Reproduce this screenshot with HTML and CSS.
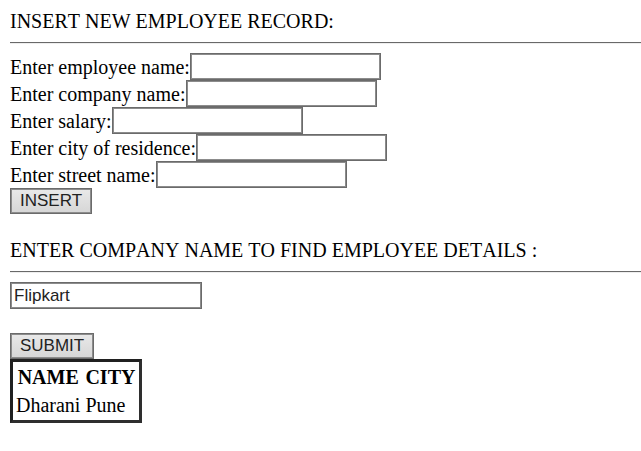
FILE: index.html
```html
<!DOCTYPE html>
<html lang="en">
<head>
<meta charset="utf-8">
<title>Employee records</title>
<link rel="stylesheet" href="styles.css">
</head>
<body>
<form class="section">
<p class="heading">INSERT NEW EMPLOYEE RECORD:</p>
<hr class="rule">
<div class="row"><label for="name">Enter employee name:</label><input class="field" id="name" type="text"></div>
<div class="row"><label for="company">Enter company name:</label><input class="field" id="company" type="text"></div>
<div class="row"><label for="salary">Enter salary:</label><input class="field" id="salary" type="text"></div>
<div class="row"><label for="city">Enter city of residence:</label><input class="field" id="city" type="text"></div>
<div class="row"><label for="street">Enter street name:</label><input class="field" id="street" type="text"></div>
<button class="button" type="button">INSERT</button>
</form>
<form class="section">
<p class="heading"><label for="query">ENTER COMPANY NAME TO FIND EMPLOYEE DETAILS :</label></p>
<hr class="rule">
<input class="field search" id="query" type="text" value="Flipkart">
<button class="button" type="button">SUBMIT</button>
</form>
<table class="results">
<thead><tr><th>NAME</th><th>CITY</th></tr></thead>
<tbody><tr><td>Dharani</td><td>Pune</td></tr></tbody>
</table>
</body>
</html>
```
FILE: styles.css
```css
* { box-sizing: border-box; }
body {
  margin: 9px 0 0 10px;
  background: #fff;
  color: #000;
  font: 20px/24px "Liberation Serif", "Times New Roman", serif;
  font-kerning: none;
}
.section {
  display: flex;
  flex-direction: column;
  align-items: flex-start;
}
.section + .section { margin-top: 24px; }
.heading { margin: 0; }
.rule {
  width: 100%;
  margin: 9px 0;
  border: 0;
  border-top: 1px solid #696969;
  border-bottom: 1px solid #eee;
}
.row {
  display: flex;
  align-items: center;
}
.field {
  width: 191px;
  height: 27px;
  padding: 2px 3px;
  border: 1px solid #6b6b6b;
  box-shadow: inset 0 0 0 1px #8c8c8c;
  background: #fff;
  color: #222;
  font: 17px "Liberation Sans", Arial, sans-serif;
}
.search {
  width: 192px;
  margin-bottom: 24px;
}
.button {
  height: 26px;
  padding: 0 9px;
  border: 1px solid #6b6b6b;
  box-shadow: inset 0 0 0 1px #8c8c8c;
  background: linear-gradient(#e9e9e9, #d6d6d6);
  color: #222;
  font: 17px "Liberation Sans", Arial, sans-serif;
}
.results {
  border: 3px solid;
  border-color: #202020 #2e2e2e #2e2e2e #202020;
  border-spacing: 2px;
}
.results th,
.results td {
  padding: 1px 2px 1px 1px;
}
```
